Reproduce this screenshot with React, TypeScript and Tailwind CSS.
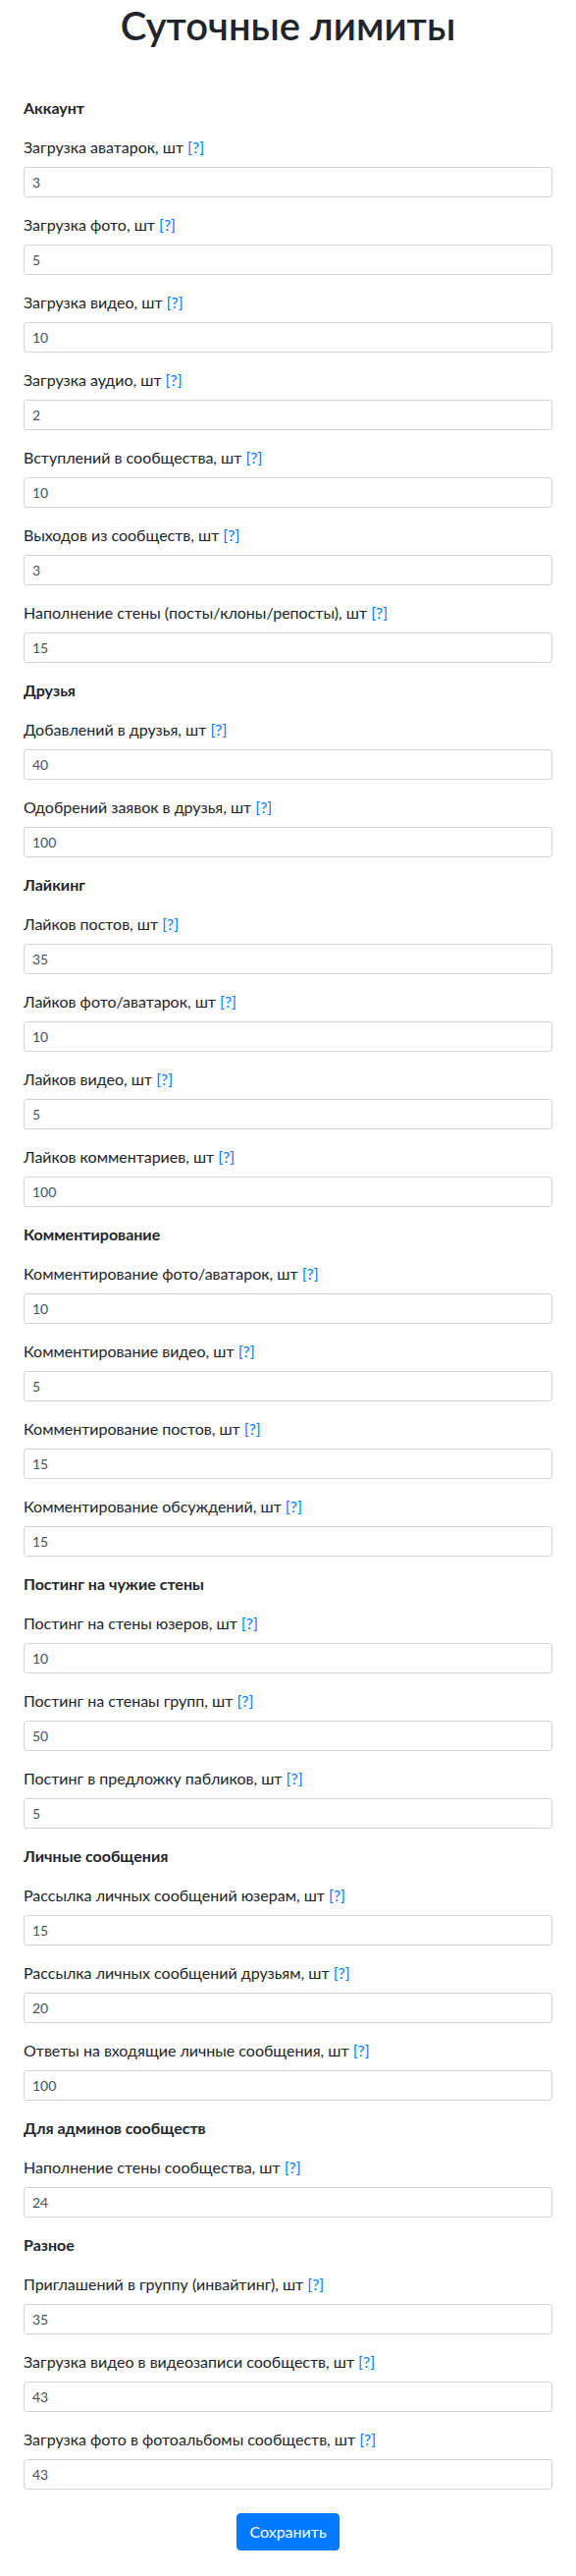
type Field = { label: string; value: string };
type Section = { title: string; fields: Field[] };

const sections: Section[] = [
  {
    title: 'Аккаунт',
    fields: [
      { label: 'Загрузка аватарок, шт', value: '3' },
      { label: 'Загрузка фото, шт', value: '5' },
      { label: 'Загрузка видео, шт', value: '10' },
      { label: 'Загрузка аудио, шт', value: '2' },
      { label: 'Вступлений в сообщества, шт', value: '10' },
      { label: 'Выходов из сообществ, шт', value: '3' },
      { label: 'Наполнение стены (посты/клоны/репосты), шт', value: '15' },
    ],
  },
  {
    title: 'Друзья',
    fields: [
      { label: 'Добавлений в друзья, шт', value: '40' },
      { label: 'Одобрений заявок в друзья, шт', value: '100' },
    ],
  },
  {
    title: 'Лайкинг',
    fields: [
      { label: 'Лайков постов, шт', value: '35' },
      { label: 'Лайков фото/аватарок, шт', value: '10' },
      { label: 'Лайков видео, шт', value: '5' },
      { label: 'Лайков комментариев, шт', value: '100' },
    ],
  },
  {
    title: 'Комментирование',
    fields: [
      { label: 'Комментирование фото/аватарок, шт', value: '10' },
      { label: 'Комментирование видео, шт', value: '5' },
      { label: 'Комментирование постов, шт', value: '15' },
      { label: 'Комментирование обсуждений, шт', value: '15' },
    ],
  },
  {
    title: 'Постинг на чужие стены',
    fields: [
      { label: 'Постинг на стены юзеров, шт', value: '10' },
      { label: 'Постинг на стенаы групп, шт', value: '50' },
      { label: 'Постинг в предложку пабликов, шт', value: '5' },
    ],
  },
  {
    title: 'Личные сообщения',
    fields: [
      { label: 'Рассылка личных сообщений юзерам, шт', value: '15' },
      { label: 'Рассылка личных сообщений друзьям, шт', value: '20' },
      { label: 'Ответы на входящие личные сообщения, шт', value: '100' },
    ],
  },
  {
    title: 'Для админов сообществ',
    fields: [{ label: 'Наполнение стены сообщества, шт', value: '24' }],
  },
  {
    title: 'Разное',
    fields: [
      { label: 'Приглашений в группу (инвайтинг), шт', value: '35' },
      { label: 'Загрузка видео в видеозаписи сообществ, шт', value: '43' },
      { label: 'Загрузка фото в фотоальбомы сообществ, шт', value: '43' },
    ],
  },
];

function LimitField({ label, value }: Field) {
  return (
    <div className="mb-4">
      <label className="block mb-2 leading-6">
        {label} <a href="#" className="text-[#007bff]">[?]</a>
      </label>
      <input
        type="text"
        defaultValue={value}
        className="block w-full h-[31px] px-2 text-sm leading-[21px] text-[#495057] bg-white border border-[#ced4da] rounded-[3.2px] outline-none"
      />
    </div>
  );
}

export default function App() {
  return (
    <div className="min-h-screen bg-white px-6 pt-[2px] pb-[10px] font-['Lato',sans-serif] text-base text-[#212529]">
      <h1 className="text-[40px] font-semibold leading-[48px] text-center mb-12">Суточные лимиты</h1>

      <form onSubmit={(e) => e.preventDefault()}>
        {sections.map((section) => (
          <div key={section.title}>
            <div className="font-bold leading-6 mb-4">{section.title}</div>
            {section.fields.map((f) => (
              <LimitField key={f.label} label={f.label} value={f.value} />
            ))}
          </div>
        ))}

        <div className="flex justify-center mt-6">
          <button
            type="submit"
            className="h-[38px] px-3 text-base leading-6 text-white bg-[#007bff] border border-[#007bff] rounded"
          >
            Сохранить
          </button>
        </div>
      </form>
    </div>
  );
}
